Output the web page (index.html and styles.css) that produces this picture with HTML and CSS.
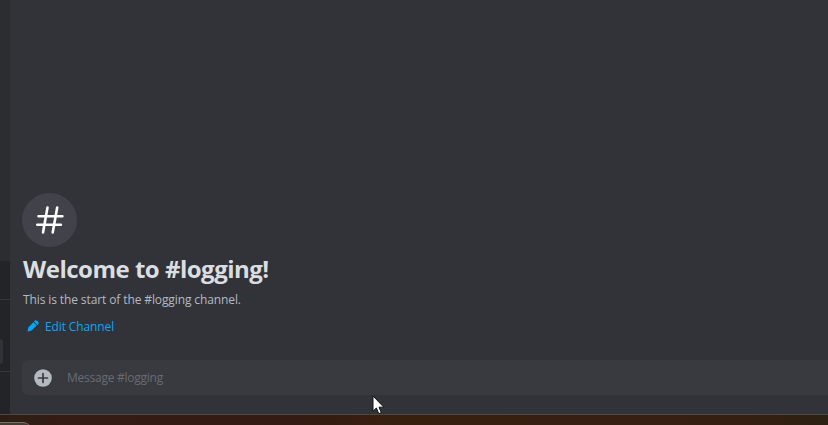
FILE: index.html
```html
<!DOCTYPE html>
<html lang="en">
<head>
<meta charset="utf-8">
<title>#logging</title>
<link rel="stylesheet" href="styles.css">
</head>
<body>
<div class="window">
  <aside class="sidebar">
    <div class="channels"></div>
    <div class="voice"></div>
    <div class="activity"><span class="activity-button"></span></div>
    <div class="account"></div>
  </aside>
  <main class="chat">
    <section class="welcome">
      <div class="channel-icon">
        <svg width="28" height="30" viewBox="0 0 28 30" fill="none" stroke="#fff" stroke-width="2.6" stroke-linecap="round"><path d="M11.5 2.500 7 27.500M21.200 2.500 16.700 27.500M2.500 11.200H26.400M1.300 19.700H24.900"/></svg>
      </div>
      <h1>Welcome to #logging!</h1>
      <p>This is the start of the #logging channel.</p>
      <a class="edit">
        <svg width="12" height="12" viewBox="0 0 12 12" fill="#00a8fc"><path d="M7.700.8a1.700 1.700 0 0 1 2.400 0l1 1a1.700 1.700 0 0 1 0 2.400l-.7.7L7 1.500zM6.300 2.200 9.700 5.600 4.300 10.800.5 11.500l.8-4.100z"/></svg>
        <span>Edit Channel</span>
      </a>
    </section>
    <div class="composer">
      <svg width="18" height="18" viewBox="0 0 18 18"><circle cx="9" cy="9" r="8.800" fill="#b5bac1"/><path d="M9 4.500V13.500M4.500 9H13.500" stroke="#383a40" stroke-width="1.700" stroke-linecap="round"/></svg>
      <span class="placeholder">Message #logging</span>
    </div>
  </main>
</div>
<footer class="desktop"><div class="taskbar-item"></div></footer>
<svg class="cursor" width="13" height="20" viewBox="0 0 13 20"><path d="M1 1V16.200L4.400 13 6.800 18.700 9.300 17.600 7 12.200H11.800Z" fill="#fff" stroke="#111214" stroke-width="1"/></svg>
</body>
</html>
```
FILE: styles.css
```css
* { box-sizing: border-box; }
body {
  margin: 0;
  width: 828px;
  height: 425px;
  overflow: hidden;
  background: #313338;
  font-family: "Open Sans", "Noto Sans", sans-serif;
}
.window {
  display: grid;
  grid-template-columns: 10px 1fr;
  height: 415px;
  border-bottom: 1px solid #4c4a49;
}
.sidebar {
  display: grid;
  grid-template-rows: 261px 38px 72px 1fr;
  background: #232428;
}
.channels { background: #2b2d31; }
.activity, .account { border-top: 1px solid #36383d; }
.activity { padding-top: 39px; }
.activity-button {
  display: block;
  width: 3px;
  height: 25px;
  border-radius: 0 3px 3px 0;
  background: #303237;
}
.chat {
  display: flex;
  flex-direction: column;
  justify-content: flex-end;
  padding: 0 0 19px 12px;
  min-width: 0;
}
.welcome { height: 167px; }
.channel-icon {
  display: grid;
  place-items: center;
  width: 55px;
  height: 54px;
  border-radius: 50%;
  background: #42434a;
}
h1, p { margin: 0; white-space: nowrap; }
h1 {
  margin-top: 6px;
  padding-left: 1px;
  font-size: 24px;
  line-height: 32px;
  font-weight: 700;
  color: #dbdee1;
  letter-spacing: -0.5px;
}
p {
  margin-top: 6px;
  padding-left: 1px;
  font-size: 12px;
  line-height: 18px;
  color: #b5bac1;
  letter-spacing: -0.11px;
}
.edit {
  display: flex;
  align-items: center;
  gap: 6px;
  margin-top: 8px;
  padding-left: 5px;
  height: 20px;
  font-size: 12px;
  line-height: 20px;
  letter-spacing: -0.12px;
  color: #00a8fc;
}
.edit svg { margin-bottom: 2px; }
.composer {
  display: flex;
  align-items: center;
  gap: 15px;
  height: 35px;
  padding-left: 12px;
  border-radius: 6px 0 0 6px;
  background: #383a40;
}
.placeholder {
  font-size: 12px;
  line-height: 18px;
  letter-spacing: -0.25px;
  color: #686b73;
}
.desktop {
  height: 10px;
  padding-top: 7px;
  background: linear-gradient(90deg, #2c1e13 0, #351c15 60px, #341b13 300px, #38200f 400px, #351f12 740px, #2c2113 828px);
}
.taskbar-item {
  width: 32px;
  height: 10px;
  border-top: 1px solid #74706b;
  border-top-right-radius: 9px;
  background: #443b35;
}
.cursor { position: absolute; left: 372px; top: 395px; }
```
